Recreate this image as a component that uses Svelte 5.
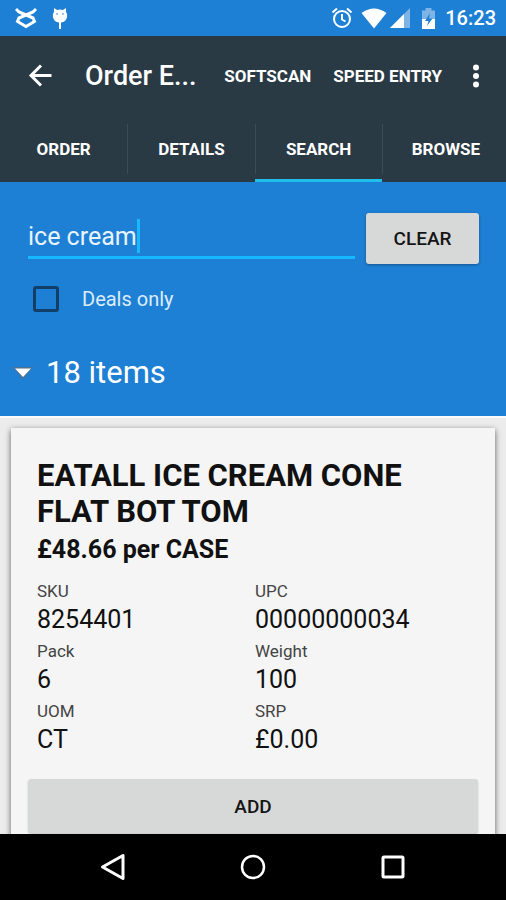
<script>
  let query = 'ice cream';
  let dealsOnly = false;
  let expanded = true;
  let activeTab = 'SEARCH';

  const tabs = ['ORDER', 'DETAILS', 'SEARCH', 'BROWSE'];

  const product = {
    name: 'EATALL ICE CREAM CONE FLAT BOT TOM',
    price: '£48.66 per CASE',
    fields: [
      { label: 'SKU', value: '8254401' },
      { label: 'UPC', value: '00000000034' },
      { label: 'Pack', value: '6' },
      { label: 'Weight', value: '100' },
      { label: 'UOM', value: 'CT' },
      { label: 'SRP', value: '£0.00' }
    ]
  };

  function clear() {
    query = '';
  }
</script>

<div class="screen">
  <div class="status">
    <svg width="22" height="22" viewBox="0 0 22 22" fill="none" stroke="#fff" stroke-width="3">
      <path d="M1 2L4 5L18 11L19.500 14.500L11 19.500L2.500 14.500L4 11L18 5L21 2" />
    </svg>
    <svg class="bug" width="16" height="23" viewBox="0 0 16 23">
      <path d="M2 1L5 3Q8 2 11 3L14 1L14 5Q16 7 15 10Q14 15 9 15.500V22H7V15.500Q2 15 1 10Q0 7 2 5Z" fill="#fff" />
      <circle cx="5" cy="7" r="1" fill="#7fb4e6" />
      <circle cx="11" cy="7" r="1" fill="#7fb4e6" />
    </svg>
    <span class="grow"></span>
    <svg width="22" height="22" viewBox="0 0 22 22" fill="none" stroke="#fff" stroke-width="2">
      <circle cx="11" cy="12" r="8" />
      <path d="M11 7V12.500L14.500 14.500M1.500 5.500L6 1.500M20.500 5.500L16 1.500" />
    </svg>
    <svg class="wifi" width="26" height="21" viewBox="0 0 26 21">
      <path d="M0.500 5Q13 -4 25.500 5L13 20.500Z" fill="#fff" />
    </svg>
    <svg class="signal" width="20" height="20" viewBox="0 0 20 20">
      <path d="M20 0V20H0Z" fill="#7fb4e6" />
      <path d="M14 6V20H0Z" fill="#fff" />
    </svg>
    <svg class="battery" width="15" height="21" viewBox="0 0 15 21">
      <path d="M1 2.500H4.500V0H10.500V2.500H14V21H1Z" fill="#7fb4e6" />
      <path d="M1 11H14V21H1Z" fill="#fff" />
      <path d="M9 5L4 13H7.500L6 18L11.500 10.500H8Z" fill="#1e80d5" />
    </svg>
    <span class="time">16:23</span>
  </div>

  <header>
    <div class="toolbar">
      <button class="icon-btn back" aria-label="Back">
        <svg width="24" height="24" viewBox="0 0 24 24" fill="none" stroke="#fff" stroke-width="3">
          <path d="M23.500 11.500H3M13 1.500L3 11.500L13 21.500" />
        </svg>
      </button>
      <h1>Order E...</h1>
      <button class="action">SOFTSCAN</button>
      <button class="action">SPEED ENTRY</button>
      <button class="icon-btn" aria-label="More options">
        <svg width="8" height="24" viewBox="0 0 8 24" fill="#fff">
          <circle cx="4" cy="3.500" r="3" />
          <circle cx="4" cy="12" r="3" />
          <circle cx="4" cy="20.500" r="3" />
        </svg>
      </button>
    </div>
    <nav class="tabs">
      {#each tabs as tab}
        <button class="tab" class:active={tab === activeTab} on:click={() => (activeTab = tab)}>
          <span>{tab}</span>
        </button>
      {/each}
    </nav>
  </header>

  <section class="search">
    <div class="search-row">
      <div class="field">
        <input type="text" aria-label="Search" bind:value={query} />
        <span class="caret"></span>
      </div>
      <button class="btn clear" on:click={clear}>CLEAR</button>
    </div>
    <label class="deals">
      <input type="checkbox" bind:checked={dealsOnly} />
      Deals only
    </label>
    <button class="count" aria-expanded={expanded} on:click={() => (expanded = !expanded)}>
      <svg width="20" height="14" viewBox="0 0 20 14">
        <path d="M0 1H20L10 13.500Z" fill="#4d7191" />
        <path d="M2 2.500H18L10 11Z" fill="#fff" />
      </svg>
      18 items
    </button>
  </section>

  <main>
    {#if expanded}
      <article class="card">
        <h2>{product.name}</h2>
        <p class="price">{product.price}</p>
        <dl>
          {#each product.fields as field}
            <div>
              <dt>{field.label}</dt>
              <dd>{field.value}</dd>
            </div>
          {/each}
        </dl>
        <button class="btn add">ADD</button>
      </article>
    {/if}
  </main>

  <footer>
    <button class="icon-btn" aria-label="Navigate back">
      <svg width="28" height="28" viewBox="0 0 28 28" fill="none" stroke="#fff" stroke-width="3" stroke-linejoin="round">
        <path d="M24 2.500V25.500L3.500 14Z" />
      </svg>
    </button>
    <button class="icon-btn" aria-label="Home">
      <svg width="28" height="28" viewBox="0 0 28 28" fill="none" stroke="#fff" stroke-width="2.500">
        <circle cx="14" cy="14" r="11" />
      </svg>
    </button>
    <button class="icon-btn" aria-label="Recent apps">
      <svg width="28" height="28" viewBox="0 0 28 28" fill="none" stroke="#fff" stroke-width="3">
        <rect x="4" y="4" width="20" height="20" rx="1" />
      </svg>
    </button>
  </footer>
</div>

<style>
  :global(body) {
    margin: 0;
  }
  .screen {
    display: flex;
    flex-direction: column;
    height: 100vh;
    font-family: Roboto, sans-serif;
    color: #111;
    background: #ececec;
  }
  button,
  input {
    font-family: inherit;
    box-sizing: border-box;
    margin: 0;
  }
  button {
    padding: 0;
    border: none;
    background: none;
    color: inherit;
    cursor: pointer;
  }
  svg {
    display: block;
    flex: none;
  }
  .status {
    display: flex;
    align-items: center;
    height: 36px;
    padding: 0 10px 0 15px;
    background: #1e80d5;
    color: #fff;
  }
  .bug {
    margin-left: 15px;
  }
  .grow {
    flex: 1;
  }
  .wifi {
    margin-left: 8px;
  }
  .signal {
    margin-left: 3px;
  }
  .battery {
    margin-left: 11px;
  }
  .time {
    margin-left: 9px;
    font-size: 20px;
    line-height: 36px;
    font-weight: 500;
  }
  header {
    background: #2a3a45;
    color: #fff;
  }
  .toolbar {
    display: flex;
    align-items: center;
    height: 80px;
    padding: 0 18px 0 28px;
  }
  .icon-btn {
    display: flex;
    justify-content: center;
    flex: none;
  }
  .toolbar .icon-btn {
    padding: 8px 0;
    width: 24px;
  }
  h1 {
    flex: 1;
    margin: 0 0 0 33px;
    font-size: 27px;
    font-weight: 500;
    white-space: nowrap;
  }
  .action {
    margin-right: 22px;
    font-size: 17px;
    font-weight: 700;
    white-space: nowrap;
  }
  .tabs {
    display: flex;
    margin-right: -3px;
    overflow: hidden;
  }
  .tab {
    flex: 1;
    height: 66px;
    padding: 8px 0 5px;
    border-bottom: 3px solid transparent;
    font-size: 17px;
    font-weight: 700;
  }
  .tab span {
    display: block;
    line-height: 50px;
  }
  .tab + .tab span {
    border-left: 1px solid #3c4c57;
  }
  .tab.active {
    border-bottom-color: #1fbfea;
  }
  .search {
    padding: 31px 27px 0 28px;
    height: 203px;
    background: #1e80d5;
    border-bottom: 2px solid #fafafa;
    color: #fff;
  }
  .search-row {
    display: flex;
    gap: 11px;
  }
  .field {
    display: flex;
    align-items: center;
    flex: 1;
    min-width: 0;
    height: 43px;
    border-bottom: 3px solid #16b9ff;
  }
  .field input {
    field-sizing: content;
    min-width: 0;
    padding: 4px 0 0;
    border: none;
    outline: none;
    background: none;
    color: #e8f3fd;
    font-size: 25px;
    caret-color: transparent;
  }
  .caret {
    width: 3px;
    height: 34px;
    margin-top: 2px;
    background: #16b9ff;
  }
  .btn {
    border-radius: 3px;
    background: #d7d9d8;
    color: #151515;
    font-weight: 500;
    box-shadow: 0 1px 3px rgba(0, 0, 0, 0.35);
  }
  .clear {
    width: 113px;
    height: 51px;
    font-size: 19px;
  }
  .deals {
    display: flex;
    align-items: center;
    gap: 23px;
    margin: 22px 0 0 5px;
    font-size: 20px;
    line-height: 26px;
    color: #dcecfb;
  }
  .deals input {
    appearance: none;
    width: 26px;
    height: 26px;
    border: 3px solid #123f68;
    border-radius: 3px;
  }
  .deals input:checked {
    background: #16b9ff;
  }
  .count {
    display: flex;
    align-items: center;
    gap: 13px;
    margin: 42px 0 0 -15px;
    font-size: 31px;
    line-height: 38px;
  }
  main {
    flex: 1;
    min-height: 0;
    overflow: hidden;
    padding: 10px 11px 0;
  }
  .card {
    padding: 30px 17px 20px;
    background: #f5f5f5;
    box-shadow: 0 2px 6px rgba(0, 0, 0, 0.6);
  }
  h2 {
    margin: 0 9px;
    font-size: 31px;
    line-height: 36px;
    font-weight: 700;
  }
  .price {
    margin: 0 9px;
    font-size: 25px;
    line-height: 40px;
    font-weight: 700;
  }
  dl {
    display: grid;
    grid-template-columns: 1fr 1fr;
    column-gap: 4px;
    margin: 10px 9px 19px;
  }
  dl div {
    height: 60px;
  }
  dt {
    font-size: 17px;
    line-height: 22px;
    color: #444;
  }
  dd {
    margin: 0;
    font-size: 25px;
    line-height: 36px;
  }
  .add {
    width: 100%;
    height: 54px;
    font-size: 19px;
    box-shadow: 0 1px 2px rgba(0, 0, 0, 0.2);
  }
  footer {
    display: flex;
    align-items: center;
    justify-content: center;
    gap: 112px;
    height: 66px;
    flex: none;
    background: #000;
  }
</style>
